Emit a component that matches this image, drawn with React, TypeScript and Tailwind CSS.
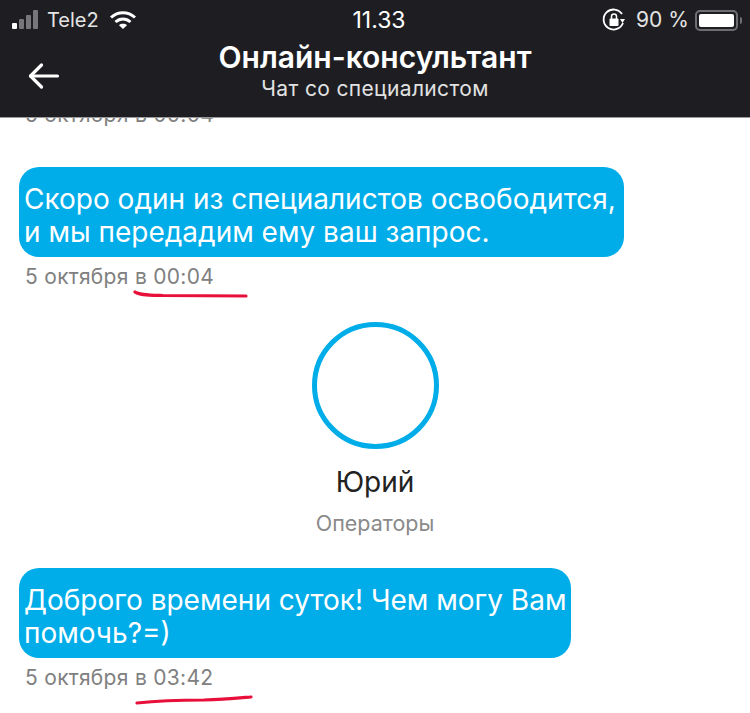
import React from 'react';

const sans = "font-['Inter','Liberation_Sans',sans-serif]";

function Stamp({ text, children }: { text: string; children?: React.ReactNode }) {
  return (
    <div className="relative mt-[8px] ml-[25px] h-[24px] whitespace-nowrap text-[21px] leading-[24px] tracking-[0.3px] text-[#808080]">
      {text}
      {children}
    </div>
  );
}

function Bubble({ width, lines }: { width: string; lines: string[] }) {
  return (
    <div className={`${width} ml-[19px] rounded-[20px] bg-[#00ade9] pl-[5px] pt-[16px] pb-[8px] text-[28px] leading-[33px] text-white`}>
      {lines.map(line => (
        <div key={line} className="whitespace-nowrap">{line}</div>
      ))}
    </div>
  );
}

function Signal() {
  return (
    <svg width="30" height="20" viewBox="0 0 30 20">
      <rect x="1" y="13" width="5" height="6" rx="1" fill="#fff" />
      <rect x="8" y="9" width="5" height="10" rx="1" fill="#77777a" />
      <rect x="15" y="5" width="5" height="14" rx="1" fill="#77777a" />
      <rect x="22" y="0" width="5" height="19" rx="1" fill="#77777a" />
    </svg>
  );
}

function Wifi() {
  return (
    <svg width="28" height="20" viewBox="0 0 28 20" fill="none" stroke="#fff" strokeWidth="3">
      <path d="M2 7.5 C9 1 19 1 26 7.5" />
      <path d="M6.5 12 C11 8 17 8 21.5 12" />
      <path d="M14 19 L10 15.2 C12 13.4 16 13.4 18 15.2 Z" fill="#fff" stroke="none" />
    </svg>
  );
}

function RotationLock() {
  return (
    <svg width="24" height="24" viewBox="0 0 24 24" fill="none">
      <path d="M21 15 A10 10 0 1 1 20 6" stroke="#fff" strokeWidth="1.8" />
      <path d="M18 11 L23 11 L20.5 15 Z" fill="#fff" />
      <rect x="7.5" y="10.5" width="9" height="7.5" rx="1" fill="#fff" />
      <path d="M9.5 11 V8.5 a2.5 2.5 0 0 1 5 0 V11" stroke="#fff" strokeWidth="1.5" />
    </svg>
  );
}

function Battery() {
  return (
    <div className="flex items-center">
      <div className="h-[21px] w-[43px] rounded-[5px] border-2 border-[#6e6e72] p-[2px]">
        <div className="h-full w-[35px] rounded-[2px] bg-white" />
      </div>
      <div className="ml-[2px] h-[7px] w-[2px] rounded-r-sm bg-[#6e6e72]" />
    </div>
  );
}

export default function App() {
  return (
    <div className={`${sans} h-[713px] w-[750px] overflow-hidden bg-white`}>
      <header className="relative h-[118px] border-b border-[#9a9a9c] bg-[#1e1e22] text-white">
        <div className="flex h-[39px] items-center pt-[1px]">
          <div className="flex w-[284px] items-center pl-[11px]">
            <Signal />
            <span className="ml-[6px] text-[20px] leading-[24px] text-[#e4e4e4]">Tele2</span>
            <span className="ml-[10px]"><Wifi /></span>
          </div>
          <div className="w-[190px] text-center text-[23px] leading-[24px]">11.33</div>
          <div className="flex flex-1 items-center pl-[128px]">
            <RotationLock />
            <span className="ml-[10px] whitespace-nowrap text-[21px] leading-[24px] text-[#e4e4e4]">90 %</span>
            <span className="ml-[6px]"><Battery /></span>
          </div>
        </div>
        <div className="text-center">
          <div className="whitespace-nowrap text-[30px] font-semibold leading-[36px]">Онлайн-консультант</div>
          <div className="whitespace-nowrap pt-[1px] text-[21px] leading-[26px] tracking-[0.35px] text-[#e2e2e2]">Чат со специалистом</div>
        </div>
        <svg className="absolute left-[28px] top-[62px]" width="32" height="28" viewBox="0 0 32 28" fill="none" stroke="#fff" strokeWidth="3.2" strokeLinecap="round" strokeLinejoin="round">
          <path d="M2.5 14 H29.5" />
          <path d="M13.5 3 L2.5 14 L13.5 25" />
        </svg>
      </header>

      <div className="h-[8px] overflow-hidden">
        <div className="-mt-[15px] ml-[25px] whitespace-nowrap text-[21px] leading-[24px] tracking-[0.3px] text-[#808080]">5 октября в 00:04</div>
      </div>

      <div className="mt-[41px]">
        <Bubble width="w-[605px]" lines={['Скоро один из специалистов освободится,', 'и мы передадим ему ваш запрос.']} />
        <Stamp text="5 октября в 00:04">
          <svg className="absolute left-[108px] top-[24px]" width="120" height="10" viewBox="0 0 120 10" fill="none" stroke="#e8103a" strokeWidth="3.2" strokeLinecap="round">
            <path d="M2 3 C6 6 14 6 30 6.5 C60 6.5 90 7 113 7" />
          </svg>
        </Stamp>
      </div>

      <div className="mt-[33px] flex flex-col items-center">
        <div className="size-[127px] rounded-full border-[5px] border-[#00ade9]" />
        <div className="mt-[16px] text-[28px] leading-[34px] text-[#222]">Юрий</div>
        <div className="mt-[12px] text-[21.5px] leading-[24px] text-[#8a8a8a]">Операторы</div>
      </div>

      <div className="mt-[33px]">
        <Bubble width="w-[552px]" lines={['Доброго времени суток! Чем могу Вам', 'помочь?=)']} />
        <Stamp text="5 октября в 03:42">
          <svg className="absolute left-[109px] top-[26px]" width="120" height="14" viewBox="0 0 120 14" fill="none" stroke="#e8103a" strokeWidth="3.2" strokeLinecap="round">
            <path d="M3 11 C30 8 50 8 70 8 C90 7.5 105 6 117 5" />
          </svg>
        </Stamp>
      </div>
    </div>
  );
}
